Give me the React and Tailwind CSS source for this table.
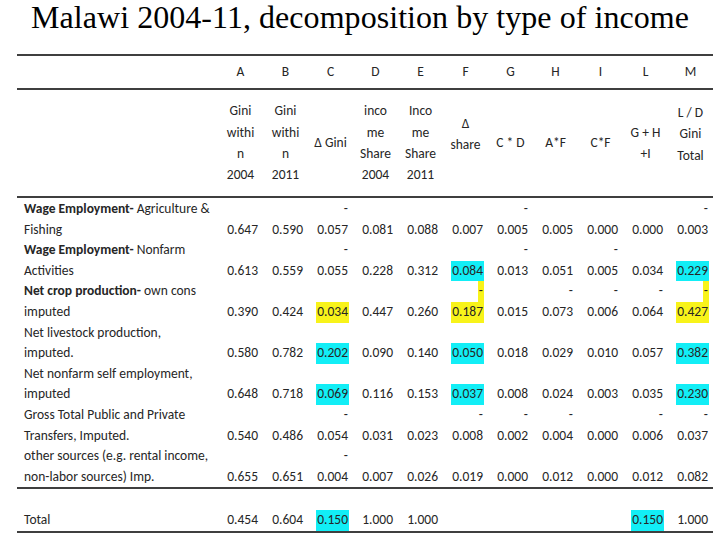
import React from 'react';

const COLS = ['A', 'B', 'C', 'D', 'E', 'F', 'G', 'H', 'I', 'L', 'M'];

// header texts, split by line; shift = pushes the block up a little like the source sheet
const HEADS = [
  { lines: ['Gini', 'withi', 'n', '2004'] },
  { lines: ['Gini', 'withi', 'n', '2011'] },
  { lines: ['Δ Gini'] },
  { lines: ['inco', 'me', 'Share', '2004'] },
  { lines: ['Inco', 'me', 'Share', '2011'] },
  { lines: ['Δ', 'share'], shift: true },
  { lines: ['C * D'] },
  { lines: ['A*F'] },
  { lines: ['C*F'] },
  { lines: ['G + H', '+I'] },
  { lines: ['L / D', 'Gini', 'Total'], shift: true },
];

// cell: [value, dash?, highlight]  highlight: 'c' cyan, 'y' yellow, 'yd' yellow incl. dash
const ROWS = [
  {
    bold: 'Wage Employment-',
    rest: ' Agriculture &',
    line2: 'Fishing',
    cells: [['0.647'], ['0.590'], ['0.057', 1], ['0.081'], ['0.088'], ['0.007'], ['0.005', 1], ['0.005'], ['0.000'], ['0.000'], ['0.003', 1]],
  },
  {
    bold: 'Wage Employment-',
    rest: ' Nonfarm',
    line2: 'Activities',
    cells: [['0.613'], ['0.559'], ['0.055', 1], ['0.228'], ['0.312'], ['0.084', 0, 'c'], ['0.013', 1], ['0.051'], ['0.005', 1], ['0.034'], ['0.229', 0, 'c']],
  },
  {
    bold: 'Net crop production-',
    rest: ' own cons',
    line2: 'imputed',
    cells: [['0.390'], ['0.424'], ['0.034', 0, 'y'], ['0.447'], ['0.260'], ['0.187', 1, 'yd'], ['0.015'], ['0.073', 1], ['0.006', 1], ['0.064', 1], ['0.427', 1, 'yd']],
  },
  {
    rest: 'Net livestock production,',
    line2: 'imputed.',
    cells: [['0.580'], ['0.782'], ['0.202', 0, 'c'], ['0.090'], ['0.140'], ['0.050', 0, 'c'], ['0.018'], ['0.029'], ['0.010'], ['0.057'], ['0.382', 0, 'c']],
  },
  {
    rest: 'Net nonfarm self employment,',
    line2: 'imputed',
    cells: [['0.648'], ['0.718'], ['0.069', 0, 'c'], ['0.116'], ['0.153'], ['0.037', 0, 'c'], ['0.008'], ['0.024'], ['0.003'], ['0.035'], ['0.230', 0, 'c']],
  },
  {
    rest: 'Gross Total Public and Private',
    line2: 'Transfers, Imputed.',
    cells: [['0.540'], ['0.486'], ['0.054', 1], ['0.031'], ['0.023'], ['0.008', 1], ['0.002', 1], ['0.004', 1], ['0.000'], ['0.006', 1], ['0.037', 1]],
  },
  {
    rest: 'other sources (e.g. rental income,',
    line2: 'non-labor sources) Imp.',
    cells: [['0.655'], ['0.651'], ['0.004', 1], ['0.007'], ['0.026'], ['0.019'], ['0.000'], ['0.012'], ['0.000'], ['0.012'], ['0.082']],
  },
];

const TOTAL = [['0.454'], ['0.604'], ['0.150', 0, 'c'], ['1.000'], ['1.000'], [''], [''], [''], [''], ['0.150', 0, 'c'], ['1.000']];

const bgFor = (h) => (h === 'c' ? 'bg-[#12eef6]' : h === 'y' || h === 'yd' ? 'bg-[#f8f31a]' : '');

const Rule = () => <div className="h-[2px] bg-[#3f3f3f]" />;

const NumCell = ({ cell }) => {
  const [v, dash, hl] = cell;
  return (
    <div className="flex flex-col items-end pr-[2px]">
      <div className="h-[20.6px] leading-[20.6px]">
        {dash ? (
          <span className={`inline-block px-[1px] ${hl === 'yd' ? 'bg-[#f8f31a]' : ''}`}>-</span>
        ) : null}
      </div>
      <div className="h-[20.6px] leading-[20.6px]">
        {v && <span className={`inline-block px-[1px] ${bgFor(hl)}`}>{v}</span>}
      </div>
    </div>
  );
};

const App = () => {
  return (
    <div className="w-[720px] h-[540px] bg-white overflow-hidden text-[#262626]" style={{ fontFamily: 'Carlito, Lato, "Open Sans", sans-serif' }}>
      <h1 className="h-[54px] text-center text-black text-[32px] leading-[1.1] font-normal tracking-[0.05px]" style={{ fontFamily: '"Liberation Serif", "Times New Roman", serif' }}>
        Malawi 2004-11, decomposition by type of income
      </h1>

      <div className="ml-[17px] w-[696px] text-[13.5px]">
        <Rule />
        {/* column letters */}
        <div className="grid grid-cols-[199px_repeat(11,45px)] h-[32px] items-center">
          <div />
          {COLS.map((c) => (
            <div key={c} className="text-center pl-[4px]">{c}</div>
          ))}
        </div>
        <Rule />
        {/* column descriptions */}
        <div className="grid grid-cols-[199px_repeat(11,45px)] h-[106px]">
          <div />
          {HEADS.map((h, i) => (
            <div key={i} className={`flex flex-col justify-center items-center pl-[4px] leading-[21.3px] ${h.shift ? 'pb-[18px]' : ''}`}>
              {h.lines.map((l, j) => (
                <div key={j} className="whitespace-nowrap">{l}</div>
              ))}
            </div>
          ))}
        </div>
        <Rule />

        {/* income sources */}
        <div className="pt-[1px]">
          {ROWS.map((r, i) => (
            <div key={i} className="grid grid-cols-[199px_repeat(11,45px)] h-[41.2px]">
              <div className="pl-[7px] leading-[20.6px] whitespace-nowrap">
                <div>
                  {r.bold && <span className="font-bold">{r.bold}</span>}
                  {r.rest}
                </div>
                <div>{r.line2}</div>
              </div>
              {r.cells.map((c, j) => (
                <NumCell key={j} cell={c} />
              ))}
            </div>
          ))}
        </div>
        <Rule />

        {/* total */}
        <div className="grid grid-cols-[199px_repeat(11,45px)] h-[41.2px]">
          <div className="pl-[7px] leading-[20.6px] flex flex-col">
            <div className="h-[20.6px]" />
            <div>Total</div>
          </div>
          {TOTAL.map((c, j) => (
            <NumCell key={j} cell={c} />
          ))}
        </div>
        <Rule />
      </div>
    </div>
  );
};

export default App;
